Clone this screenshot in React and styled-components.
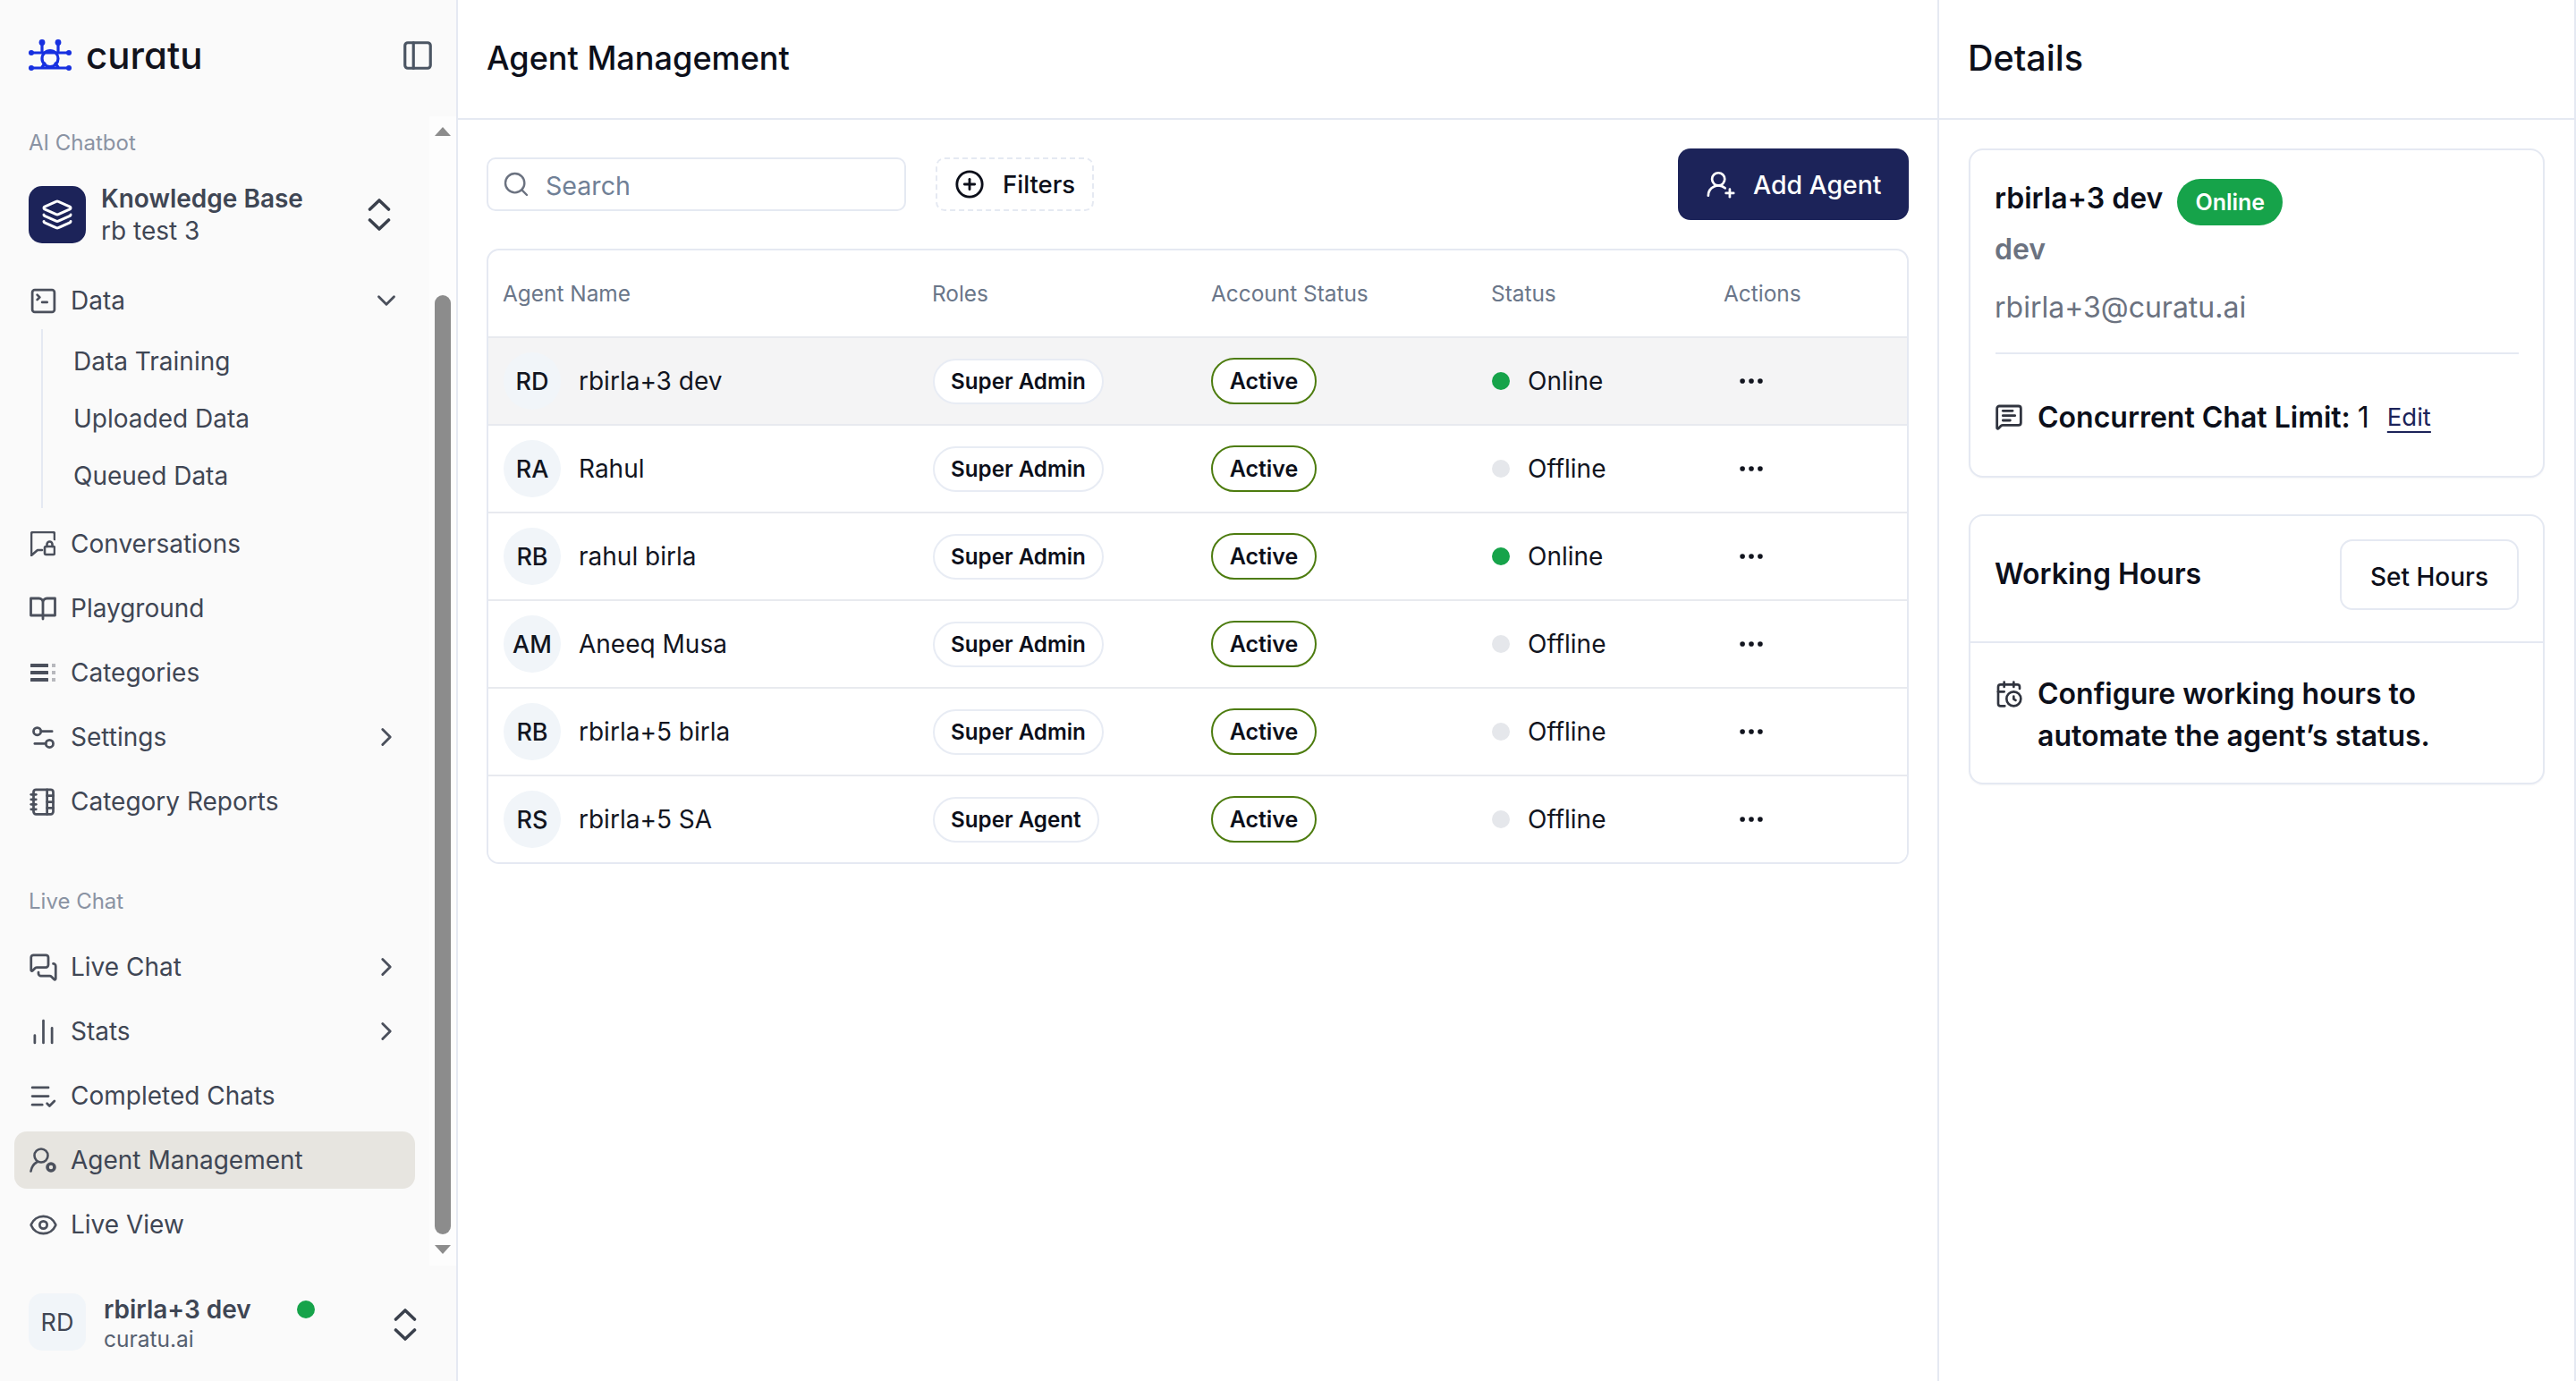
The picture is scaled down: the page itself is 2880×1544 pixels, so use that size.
import React from "react";
import styled, { createGlobalStyle } from "styled-components";
import {
  PanelLeft, Layers, SquareTerminal, Settings2, NotebookTabs, MessagesSquare, ChartNoAxesColumn,
  ListCheck, Eye, MessageSquareText, CalendarClock, CirclePlus, UserRoundPlus, Search, Ellipsis,
  ChevronRight, ChevronDown,
} from "lucide-react";

const NAVY = "#1c2359";
const LINE = "#e5e9f2";
const INK = "#3f4654";

const Global = createGlobalStyle`
  * { box-sizing: border-box; }
  html, body { margin: 0; padding: 0; background: #fff; }
  body { font-family: Inter, "Liberation Sans", sans-serif; color: #0c0f1a; }
`;

const Shell = styled.div`
  display: flex;
  width: 2880px;
  height: 1544px;
  overflow: hidden;
  background: #fff;
`;

/* ---------- sidebar ---------- */
const Sidebar = styled.aside`
  display: flex;
  flex-direction: column;
  flex: 0 0 512px;
  background: #fafafa;
  border-right: 2px solid ${LINE};
`;
const Brand = styled.div`
  display: flex;
  align-items: center;
  height: 130px;
  padding: 0 24px 6px 32px;
  color: #4b5563;
`;
const LogoText = styled.span`
  margin-left: 16px;
  margin-right: auto;
  font-size: 42px;
  line-height: 1;
  font-weight: 500;
  color: #12131c;
  font-feature-settings: "cv11" 1;
`;
const SideBody = styled.div`
  display: flex;
  flex: 0 0 1285px;
`;
const Nav = styled.nav`
  flex: 0 0 480px;
  padding: 10px 16px 0;
`;
const Gutter = styled.div`
  flex: 0 0 30px;
  display: flex;
  flex-direction: column;
  align-items: center;
  padding-top: 12px;
  background: #fdfdfd;
`;
const Arrow = styled.div`
  width: 0;
  height: 0;
  border-left: 9px solid transparent;
  border-right: 9px solid transparent;
  ${(p) => (p.$down ? "border-top: 10px solid #8c8c8c;" : "border-bottom: 10px solid #8c8c8c;")}
`;
const Thumb = styled.div`
  width: 18px;
  height: 1050px;
  margin: 178px 0 12px;
  border-radius: 9px;
  background: #8c8c8c;
`;
const SectionLabel = styled.div`
  height: 40px;
  line-height: 40px;
  margin-top: ${(p) => p.$mt || 0}px;
  margin-bottom: ${(p) => p.$mb || 0}px;
  padding-left: 16px;
  font-size: 24px;
  color: #8a93a3;
`;
const Workspace = styled.div`
  display: flex;
  align-items: center;
  height: 64px;
  padding: 0 27px 0 16px;
  margin-bottom: 32px;
`;
const WorkspaceIcon = styled.div`
  display: flex;
  align-items: center;
  justify-content: center;
  flex: 0 0 64px;
  height: 64px;
  border-radius: 15px;
  background: ${NAVY};
  color: #fff;
`;
const TwoLines = styled.div`
  flex: 1;
  margin-left: ${(p) => p.$ml || 17}px;
`;
const StrongLine = styled.div`
  font-size: 28px;
  line-height: 36px;
  font-weight: 600;
  color: ${INK};
`;
const PlainLine = styled.div`
  font-size: 28px;
  line-height: 36px;
  color: ${INK};
`;
const NavItem = styled.div`
  display: flex;
  align-items: center;
  height: 64px;
  margin-bottom: 8px;
  padding: 0 15px 0 18px;
  border-radius: 14px;
  font-size: 28px;
  color: ${INK};
  background: ${(p) => (p.$active ? "#e7e5e0" : "transparent")};
`;
const NavIcon = styled.span`
  display: flex;
  align-items: center;
  justify-content: center;
  flex: 0 0 28px;
  min-width: 0;
  margin-right: 17px;
  color: #4b505c;
  svg { flex-shrink: 0; }
`;
const NavText = styled.span`
  flex: 1;
`;
const Caret = styled.span`
  display: flex;
  color: #4b505c;
`;
const SubList = styled.div`
  margin: -8px 0 8px 30px;
  padding: 4px 0;
  border-left: 2px solid ${LINE};
`;
const SubItem = styled.div`
  height: 64px;
  line-height: 64px;
  padding-left: 34px;
  font-size: 28px;
  color: ${INK};
`;
const Footer = styled.div`
  display: flex;
  align-items: flex-start;
  padding: 31px 44px 0 32px;
`;
const FootAvatar = styled.div`
  display: flex;
  align-items: center;
  justify-content: center;
  flex: 0 0 64px;
  height: 64px;
  border-radius: 15px;
  background: #f1f5f9;
  font-size: 27px;
  color: ${INK};
`;
const FootName = styled.div`
  font-size: 28px;
  line-height: 36px;
  font-weight: 600;
  color: ${INK};
`;
const FootSub = styled.div`
  margin-top: -3px;
  font-size: 24.5px;
  line-height: 36px;
  color: #566070;
`;
const FootDot = styled.span`
  flex: 0 0 20px;
  width: 20px;
  height: 20px;
  margin: 8px 88px 0 0;
  border-radius: 50%;
  background: #16a34a;
`;
const FootSwap = styled.span`
  display: flex;
  margin-top: 16px;
`;

/* ---------- main ---------- */
const Main = styled.main`
  flex: 0 0 1656px;
  border-right: 2px solid ${LINE};
`;
const PageHead = styled.header`
  display: flex;
  align-items: center;
  height: 134px;
  padding: 0 32px 2px;
  border-bottom: 2px solid ${LINE};
`;
const PageTitle = styled.h1`
  margin: 0;
  font-size: ${(p) => p.$size}px;
  font-weight: 500;
  color: #0c0f1a;
`;
const Content = styled.div`
  padding: 32px;
`;
const Toolbar = styled.div`
  display: flex;
  align-items: center;
  height: 80px;
  margin-bottom: 32px;
`;
const SearchBox = styled.div`
  display: flex;
  align-items: center;
  width: 469px;
  height: 60px;
  padding-left: 15px;
  border: 2px solid ${LINE};
  border-radius: 10px;
  color: #6b7280;
`;
const Placeholder = styled.span`
  margin-left: 17px;
  padding-top: 2px;
  font-size: 28.6px;
  color: #708096;
`;
const FilterButton = styled.div`
  display: flex;
  align-items: center;
  width: 177px;
  height: 60px;
  margin-left: 33px;
  padding-left: 19px;
  border: 2px dashed ${LINE};
  border-radius: 10px;
  font-size: 27.5px;
  font-weight: 500;
  gap: 20px;
  color: #0c0f1a;
`;
const AddButton = styled.div`
  display: flex;
  align-items: center;
  width: 258px;
  height: 80px;
  margin-left: auto;
  padding-left: 31px;
  gap: 19px;
  border-radius: 14px;
  background: ${NAVY};
  font-size: 28.4px;
  font-weight: 500;
  color: #fff;
`;
const TableCard = styled.div`
  height: 688px;
  border: 2px solid ${LINE};
  border-radius: 14px;
  overflow: hidden;
`;
const Table = styled.table`
  width: 100%;
  table-layout: fixed;
  border-collapse: separate;
  border-spacing: 0;
`;
const Col = styled.col`
  width: ${(p) => p.$w}px;
`;
const Th = styled.th`
  height: 98px;
  padding: 0 16px;
  border-bottom: 2px solid #e8eaef;
  text-align: left;
  font-size: 24.4px;
  font-weight: 400;
  color: #6a7689;
`;
const Tr = styled.tr`
  background: ${(p) => (p.$selected ? "#f4f4f5" : "#fff")};
  &:last-child td { border-bottom: 0; height: 96px; }
`;
const Td = styled.td`
  height: 98px;
  padding: 0 17px;
  border-bottom: 2px solid #e8eaef;
  font-size: 28px;
  color: #12151f;
`;
const NameCell = styled.div`
  display: flex;
  align-items: center;
  gap: 20px;
`;
const Avatar = styled.div`
  display: flex;
  align-items: center;
  justify-content: center;
  flex: 0 0 64px;
  height: 64px;
  border-radius: 50%;
  background: #f1f5f9;
  font-size: 27px;
  font-weight: 500;
`;
const RolePill = styled.span`
  display: inline-flex;
  align-items: center;
  height: 51px;
  padding: 0 18px;
  border: 2px solid #e8ecf4;
  border-radius: 26px;
  background: #fff;
  font-size: 24.2px;
  font-weight: 600;
  color: #0c0f1a;
`;
const ActivePill = styled.span`
  display: inline-flex;
  align-items: center;
  justify-content: center;
  width: 118px;
  height: 52px;
  margin-left: -1px;
  border: 2px solid #4d7c0f;
  border-radius: 26px;
  background: #fff;
  font-size: 25px;
  font-weight: 600;
  color: #0c0f1a;
`;
const StatusCell = styled.div`
  display: flex;
  align-items: center;
  gap: 20px;
`;
const Dot = styled.span`
  width: 20px;
  height: 20px;
  border-radius: 50%;
  background: ${(p) => (p.$on ? "#16a34a" : "#e5e7eb")};
`;
const Dots = styled.span`
  display: flex;
  margin-left: 13px;
  color: #12151f;
`;

/* ---------- details ---------- */
const Details = styled.section`
  flex: 0 0 712px;
  border-right: 2px solid ${LINE};
`;
const DetailsBody = styled.div`
  display: flex;
  flex-direction: column;
  gap: 41px;
  padding: 32px 33px;
`;
const Card = styled.div`
  height: ${(p) => p.$h}px;
  border: 2px solid ${LINE};
  border-radius: 16px;
  box-shadow: 0 1px 2px rgba(15, 23, 42, 0.04);
  background: #fff;
`;
const ProfileBody = styled.div`
  padding: 32px 28px 0 27px;
`;
const NameRow = styled.div`
  display: flex;
  align-items: flex-start;
  gap: 16px;
`;
const ProfileName = styled.span`
  font-size: 32px;
  line-height: 44px;
  font-weight: 600;
  color: #0c0f1a;
`;
const OnlineBadge = styled.span`
  display: inline-flex;
  align-items: center;
  justify-content: center;
  width: 118px;
  height: 52px;
  border-radius: 26px;
  background: #16a34a;
  color: #fff;
  font-size: 25px;
  font-weight: 600;
`;
const Handle = styled.div`
  margin-top: 7px;
  font-size: 32px;
  line-height: 40px;
  font-weight: 600;
  color: #6b7280;
`;
const Email = styled.div`
  margin-top: 25px;
  font-size: 32px;
  line-height: 40px;
  color: #6b7280;
`;
const Divider = styled.div`
  height: 2px;
  margin: 30px -1px 0 1px;
  background: ${LINE};
`;
const LimitRow = styled.div`
  display: flex;
  align-items: center;
  height: 40px;
  margin-top: 50px;
  font-size: 32px;
  color: #0c0f1a;
`;
const SmallIcon = styled.span`
  display: flex;
  flex: 0 0 48px;
  color: #30343f;
`;
const Strong = styled.strong`
  font-weight: 600;
  margin-right: 8px;
`;
const EditLink = styled.span`
  margin-left: 20px;
  font-size: 27.5px;
  color: ${NAVY};
  text-decoration: underline;
  text-decoration-thickness: 2px;
  text-underline-offset: 6px;
`;
const HoursHead = styled.div`
  display: flex;
  align-items: center;
  justify-content: space-between;
  height: 142px;
  padding: 0 27px 9px 27px;
  border-bottom: 2px solid ${LINE};
`;
const HoursTitle = styled.span`
  padding-bottom: 3px;
  font-size: 32px;
  font-weight: 600;
  color: #0c0f1a;
`;
const HoursButton = styled.div`
  display: flex;
  align-items: center;
  justify-content: center;
  width: 200px;
  height: 79px;
  padding-top: 5px;
  border: 2px solid ${LINE};
  border-radius: 14px;
  font-size: 28px;
  font-weight: 500;
  color: #0c0f1a;
`;
const HoursBody = styled.div`
  display: flex;
  align-items: flex-start;
  padding: 33px 27px 0;
  font-size: 32px;
  line-height: 47px;
  font-weight: 600;
  color: #0c0f1a;
`;
const HoursIcon = styled(SmallIcon)`
  padding-top: 8px;
`;

/* ---------- drawings ---------- */
const Logo = () => (
  <svg width="48" height="36" viewBox="0 0 48 36" fill="none" stroke="#1730e0" strokeWidth="3.2" strokeLinecap="round">
    <path d="M2 15H46M2 32H46M15 3V13M33 3V13M15 31L18 27M33 31L30 27" />
    <circle cx="24" cy="21.500" r="9" />
    <g fill="#1730e0" stroke="none">
      <circle cx="15" cy="3.500" r="3.400" /><circle cx="33" cy="3.500" r="3.400" />
      <circle cx="3" cy="15" r="3" /><circle cx="45" cy="15" r="3" />
      <circle cx="3" cy="32" r="3" /><circle cx="45" cy="32" r="3" />
    </g>
  </svg>
);
const Swap = () => (
  <svg width="26" height="38" viewBox="0 0 26 38" fill="none" stroke="#3a404c" strokeWidth="3.6" strokeLinecap="round" strokeLinejoin="round">
    <path d="M2.500 13L13 3L23.500 13M2.500 25L13 35L23.500 25" />
  </svg>
);
const ChatLockIcon = () => (
  <svg width="28" height="28" viewBox="0 0 28 28" fill="none" stroke="currentColor" strokeWidth="2.600" strokeLinecap="round" strokeLinejoin="round">
    <path d="M27 9V3a2 2 0 0 0-2-2H3a2 2 0 0 0-2 2v24l7-6h5" />
    <rect x="16" y="17" width="11" height="9" rx="1.500" />
    <path d="M18.500 17v-2.500a3 3 0 0 1 6 0V17" />
  </svg>
);
const BookIcon = () => (
  <svg width="30" height="28" viewBox="0 0 30 28" fill="none" stroke="currentColor" strokeWidth="2.800" strokeLinecap="round" strokeLinejoin="round">
    <path d="M1.500 3h9a4.500 4.500 0 0 1 4.500 4.500V26M28.500 3h-9A4.500 4.500 0 0 0 15 7.500M1.500 3v19h27V3" />
  </svg>
);
const CategoriesIcon = () => (
  <svg width="28" height="22" viewBox="0 0 28 22" fill="currentColor">
    <rect x="0" y="1" width="20" height="4" rx="0.500" /><rect x="0" y="9" width="20" height="4" rx="0.500" /><rect x="0" y="17" width="20" height="4" rx="0.500" />
    <g opacity="0.38"><rect x="24" y="1" width="4" height="4" /><rect x="24" y="9" width="4" height="4" /><rect x="24" y="17" width="4" height="4" /></g>
  </svg>
);
const AgentIcon = () => (
  <svg width="30" height="28" viewBox="0 0 30 28" fill="none" stroke="currentColor" strokeWidth="2.600" strokeLinecap="round">
    <circle cx="13" cy="9" r="7.500" />
    <path d="M1.500 26.500C2.500 21 5 18 8 16.500" />
    <circle cx="24" cy="22" r="4" strokeWidth="3.600" />
  </svg>
);

const agents = [
  ["RD", "rbirla+3 dev", "Super Admin", true, true],
  ["RA", "Rahul", "Super Admin", false],
  ["RB", "rahul birla", "Super Admin", true],
  ["AM", "Aneeq Musa", "Super Admin", false],
  ["RB", "rbirla+5 birla", "Super Admin", false],
  ["RS", "rbirla+5 SA", "Super Agent", false],
];

const Item = ({ icon, label, caret, active }) => (
  <NavItem $active={active}>
    <NavIcon>{icon}</NavIcon>
    <NavText>{label}</NavText>
    {caret === "right" && <Caret><ChevronRight size={34} strokeWidth={2} /></Caret>}
    {caret === "down" && <Caret><ChevronDown size={34} strokeWidth={2} /></Caret>}
  </NavItem>
);

export default function App() {
  const i = { size: 33, strokeWidth: 2 };
  return (
    <Shell>
      <Global />
      <Sidebar>
        <Brand>
          <Logo />
          <LogoText>curatu</LogoText>
          <PanelLeft size={38} strokeWidth={2} />
        </Brand>
        <SideBody>
          <Nav>
            <SectionLabel $mb={28}>AI Chatbot</SectionLabel>
            <Workspace>
              <WorkspaceIcon><Layers size={36} strokeWidth={2} /></WorkspaceIcon>
              <TwoLines>
                <StrongLine>Knowledge Base</StrongLine>
                <PlainLine>rb test 3</PlainLine>
              </TwoLines>
              <Swap />
            </Workspace>
            <Item icon={<SquareTerminal {...i} />} label="Data" caret="down" />
            <SubList>
              <SubItem>Data Training</SubItem>
              <SubItem>Uploaded Data</SubItem>
              <SubItem>Queued Data</SubItem>
            </SubList>
            <Item icon={<ChatLockIcon />} label="Conversations" />
            <Item icon={<BookIcon />} label="Playground" />
            <Item icon={<CategoriesIcon />} label="Categories" />
            <Item icon={<Settings2 {...i} />} label="Settings" caret="right" />
            <Item icon={<NotebookTabs {...i} />} label="Category Reports" />
            <SectionLabel $mt={60} $mb={21}>Live Chat</SectionLabel>
            <Item icon={<MessagesSquare {...i} />} label="Live Chat" caret="right" />
            <Item icon={<ChartNoAxesColumn {...i} />} label="Stats" caret="right" />
            <Item icon={<ListCheck {...i} />} label="Completed Chats" />
            <Item icon={<AgentIcon />} label="Agent Management" active />
            <Item icon={<Eye {...i} />} label="Live View" />
          </Nav>
          <Gutter>
            <Arrow />
            <Thumb />
            <Arrow $down />
          </Gutter>
        </SideBody>
        <Footer>
          <FootAvatar>RD</FootAvatar>
          <TwoLines $ml={20}>
            <FootName>rbirla+3 dev</FootName>
            <FootSub>curatu.ai</FootSub>
          </TwoLines>
          <FootDot />
          <FootSwap><Swap /></FootSwap>
        </Footer>
      </Sidebar>

      <Main>
        <PageHead>
          <PageTitle $size={36.1}>Agent Management</PageTitle>
        </PageHead>
        <Content>
          <Toolbar>
            <SearchBox>
              <Search size={32} strokeWidth={1.800} />
              <Placeholder>Search</Placeholder>
            </SearchBox>
            <FilterButton>
              <CirclePlus size={34} strokeWidth={2} />
              Filters
            </FilterButton>
            <AddButton>
              <UserRoundPlus size={34} strokeWidth={1.900} />
              Add Agent
            </AddButton>
          </Toolbar>
          <TableCard>
            <Table>
              <colgroup>
                <Col $w={480} /><Col $w={312} /><Col $w={313} /><Col $w={260} /><Col $w={221} />
              </colgroup>
              <thead>
                <tr>
                  <Th>Agent Name</Th><Th>Roles</Th><Th>Account Status</Th><Th>Status</Th><Th>Actions</Th>
                </tr>
              </thead>
              <tbody>
                {agents.map(([ini, name, role, on, sel], n) => (
                  <Tr key={n} $selected={sel}>
                    <Td><NameCell><Avatar>{ini}</Avatar>{name}</NameCell></Td>
                    <Td><RolePill>{role}</RolePill></Td>
                    <Td><ActivePill>Active</ActivePill></Td>
                    <Td><StatusCell><Dot $on={on} />{on ? "Online" : "Offline"}</StatusCell></Td>
                    <Td><Dots><Ellipsis size={34} strokeWidth={2} /></Dots></Td>
                  </Tr>
                ))}
              </tbody>
            </Table>
          </TableCard>
        </Content>
      </Main>

      <Details>
        <PageHead>
          <PageTitle $size={39.500}>Details</PageTitle>
        </PageHead>
        <DetailsBody>
          <Card $h={368}>
            <ProfileBody>
              <NameRow>
                <ProfileName>rbirla+3 dev</ProfileName>
                <OnlineBadge>Online</OnlineBadge>
              </NameRow>
              <Handle>dev</Handle>
              <Email>rbirla+3@curatu.ai</Email>
              <Divider />
              <LimitRow>
                <SmallIcon><MessageSquareText size={32} strokeWidth={2.100} /></SmallIcon>
                <Strong>Concurrent Chat Limit:</Strong>1
                <EditLink>Edit</EditLink>
              </LimitRow>
            </ProfileBody>
          </Card>
          <Card $h={302}>
            <HoursHead>
              <HoursTitle>Working Hours</HoursTitle>
              <HoursButton>Set Hours</HoursButton>
            </HoursHead>
            <HoursBody>
              <HoursIcon><CalendarClock size={32} strokeWidth={2} /></HoursIcon>
              <span>Configure working hours to<br />automate the agent’s status.</span>
            </HoursBody>
          </Card>
        </DetailsBody>
      </Details>
    </Shell>
  );
}
